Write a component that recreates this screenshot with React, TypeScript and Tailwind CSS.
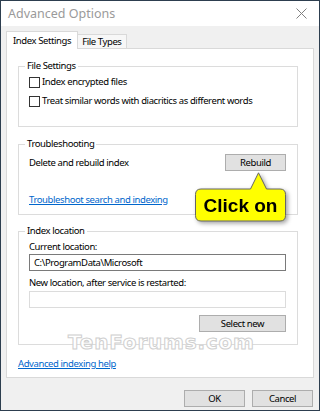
import React from "react";

function Checkbox({ label }: { label: string }) {
  return (
    <label className="flex h-[12px] items-center gap-[2px]">
      <span className="h-[11px] w-[11px] shrink-0 border border-[#333] bg-white" />
      <span>{label}</span>
    </label>
  );
}

function Button({ children, className = "" }: { children: React.ReactNode; className?: string }) {
  return (
    <button className={`h-[17px] border border-[#adadad] bg-[#e1e1e1] leading-none text-[#000] ${className}`}>
      {children}
    </button>
  );
}

function Group({ title, children, className = "" }: { title: string; children: React.ReactNode; className?: string }) {
  return (
    <fieldset className={`w-[280px] border border-[#dcdcdc] pl-[10px] pr-[11px] ${className}`}>
      <legend className="ml-[-4px] px-[2px] leading-[12px]">{title}</legend>
      {children}
    </fieldset>
  );
}

export default function App() {
  return (
    <div className="relative h-[411px] w-[320px] overflow-hidden border border-[#2d3e4f] bg-[#f0f0f0] font-['Noto_Sans',sans-serif] text-[9.5px] leading-[12px] tracking-[-0.4px] text-[#000]">
      {/* Title bar */}
      <div className="flex h-[25px] items-center justify-between bg-white pl-[7px] pr-[12px]">
        <span className="text-[12.5px] tracking-normal text-[#9a9a9a]">Advanced Options</span>
        <svg width="11" height="11" viewBox="0 0 11 11">
          <path d="M0.5 0.5L10.5 10.5M10.5 0.5L0.5 10.5" stroke="#808080" strokeWidth="1" />
        </svg>
      </div>

      <div className="px-[5px] pt-[5px]">
        {/* Tabs */}
        <div className="relative z-10 flex items-end">
          <div className="-mb-px h-[18px] border border-b-0 border-[#d9d9d9] bg-white px-[6px] leading-[17px]">
            Index Settings
          </div>
          <div className="h-[14px] border border-b-0 border-l-0 border-[#d9d9d9] bg-[#f7f7f7] px-[4px] leading-[13px]">
            File Types
          </div>
        </div>

        {/* Panel */}
        <div className="relative h-[330px] border border-[#d9d9d9] bg-white pl-[11px] pt-[11px]">
          <Group title="File Settings" className="h-[67px]">
            <div className="flex flex-col gap-[7px] pt-[4px]">
              <Checkbox label="Index encrypted files" />
              <Checkbox label="Treat similar words with diacritics as different words" />
            </div>
          </Group>

          <Group title="Troubleshooting" className="mt-[11px] h-[77px]">
            <div className="flex items-center justify-between pt-[4px]">
              <span>Delete and rebuild index</span>
              <Button className="w-[61px]">Rebuild</Button>
            </div>
            <a className="mt-[23px] block text-[#0066cc] underline">Troubleshoot search and indexing</a>
          </Group>

          <Group title="Index location" className="mt-[10px] h-[120px]">
            <div className="pt-[4px]">Current location:</div>
            <div className="mt-[1px] flex h-[17px] items-center border border-[#7a7a7a] px-[4px]">
              C:\ProgramData\Microsoft
            </div>
            <div className="mt-[6px]">New location, after service is restarted:</div>
            <div className="mt-[2px] h-[17px] border border-[#dcdcdc]" />
            <div className="mt-[7px] flex justify-end">
              <Button className="w-[87px]">Select new</Button>
            </div>
          </Group>

          <a className="mt-[13px] block text-[#0066cc] underline">Advanced indexing help</a>

          {/* Watermark */}
          <div className="absolute left-[61px] top-[285px] font-['DejaVu_Sans',sans-serif] text-[20px] font-bold leading-[16px] tracking-[0.8px] text-white [-webkit-text-stroke:1px_#cfcfcf]">
            TenForums.com
          </div>

          {/* Callout */}
          <div className="absolute left-[186px] top-[123px] h-[50px] w-[95px] drop-shadow-[2px_2px_2px_rgba(0,0,0,0.35)]">
            <svg width="95" height="50" viewBox="0 0 95 50" className="absolute left-0 top-0">
              <path
                d="M8 17 H57.5 L65.5 0.8 L73.5 17 H87 Q92.5 17 92.5 22.5 V43.5 Q92.5 49 87 49 H8 Q2.5 49 2.5 43.5 V22.5 Q2.5 17 8 17 Z"
                fill="#ffff00"
                stroke="#666"
                strokeWidth="1"
              />
            </svg>
            <div className="absolute left-[2px] top-[17px] flex h-[32px] w-[91px] items-center justify-center font-['Liberation_Sans',sans-serif] text-[19px] font-bold leading-none tracking-normal text-black">
              Click on
            </div>
          </div>
        </div>
      </div>

      {/* Bottom buttons */}
      <div className="absolute bottom-[3px] right-[6px] flex gap-[7px]">
        <Button className="w-[61px]">OK</Button>
        <Button className="w-[61px]">Cancel</Button>
      </div>
    </div>
  );
}
